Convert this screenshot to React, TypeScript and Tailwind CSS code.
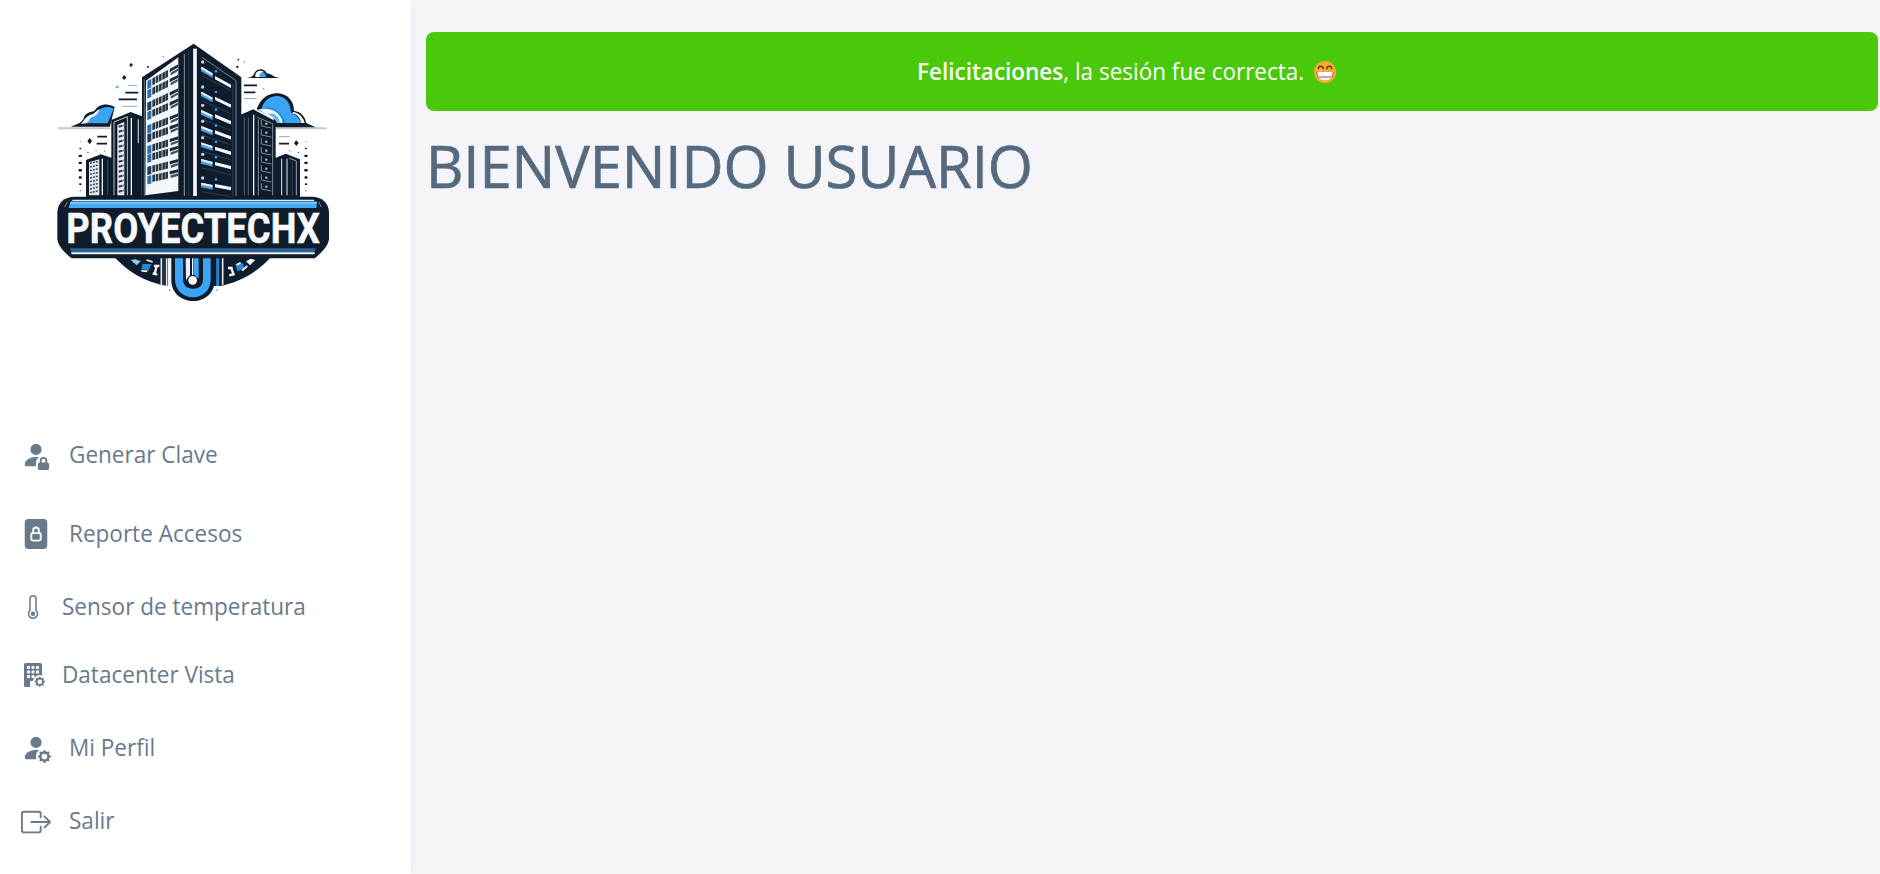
import React from 'react';
import {
  BsPersonFillLock,
  BsFileLockFill,
  BsThermometer,
  BsBuildingFillGear,
  BsPersonFillGear,
  BsBoxArrowRight,
} from 'react-icons/bs';

const INK = '#0f1c2b';
const SKY = '#3ba4f4';

const lerp = (a: number, b: number, t: number) => a + (b - a) * t;

function LeftFace() {
  const rows = [153, 181, 218, 246, 286, 313, 348, 374, 410, 438];
  return (
    <g>
      <polygon points="318,152 415,82 415,483 316,496" fill="#f3f7fa" />
      {rows.map((yl, i) => {
        const rise = lerp(50, 20, (yl - 153) / 285);
        const at = (x: number) => yl - (rise * (x - 322)) / 93;
        const h = 21;
        return (
          <g key={yl}>
            <polygon
              points={`322,${at(322)} 334,${at(334)} 334,${at(334) + h + 4} 322,${at(322) + h + 4}`}
              fill={i % 3 === 2 ? '#1c3f61' : '#2f6ea6'}
            />
            {[337, 347, 357, 367, 376].map((x) => (
              <polygon
                key={x}
                points={`${x},${at(x)} ${x + 8},${at(x + 8)} ${x + 8},${at(x + 8) + h} ${x},${at(x) + h}`}
                fill="#2b3846"
              />
            ))}
            <polygon
              points={`389,${at(389)} 415,${at(415)} 415,${at(415) + 9} 389,${at(389) + 10}`}
              fill="#1d2a38"
            />
            <polygon
              points={`392,${at(392) + 13} 415,${at(415) + 12} 415,${at(415) + 19} 392,${at(392) + 21}`}
              fill="#44515e"
            />
          </g>
        );
      })}
    </g>
  );
}

function RightFace() {
  const rows = [
    [110, 138],
    [185, 200],
    [240, 253],
    [288, 301],
    [337, 350],
    [387, 396],
    [458, 462],
  ];
  return (
    <g>
      <path d="M486 82L588 152V500" fill="none" stroke="#6c8296" strokeWidth="3" />
      <path d="M579 160V500" stroke="#24445f" strokeWidth="3" />
      {rows.map(([l, r], i) => {
        const s = lerp(20, 7, i / 6);
        return (
          <g key={l}>
            <polygon points={`483,${l} 518,${l + s} 518,${l + s + 14} 483,${l + 14}`} fill="#4d9fe0" />
            <path d={`M484 ${l + 3}L517 ${l + s + 3}`} stroke="#e6f3fc" strokeWidth="6" />
            <polygon points={`525,${r} 573,${r + s * 1.3} 573,${r + s * 1.3 + 10} 525,${r + 10}`} fill="#f2f7fb" />
            <circle cx="488" cy={l - 14} r="5" fill="#c7d3de" />
            <circle cx="528" cy={r - 14} r="4" fill="#3f9be0" />
            <path d={`M486 ${l + 27}L572 ${l + 27 + s * 2.2}`} stroke="#34465a" strokeWidth="2.5" />
          </g>
        );
      })}
    </g>
  );
}

function SideTowers() {
  const l = Array.from({ length: 14 }, (_, i) => 286 + i * 15);
  const o = Array.from({ length: 9 }, (_, i) => 400 + i * 11);
  const r = [278, 305, 332, 359, 386, 413, 440, 467];
  return (
    <g>
      <polygon points="138,390 183,373 216,384 216,505 138,505" fill={INK} />
      <polygon points="147,397 178,388 178,496 147,496" fill="#dfe5ea" />
      {o.map((y) => (
        <path key={y} d={`M150 ${y}L176 ${y - 6}`} stroke="#33414f" strokeWidth="4" strokeDasharray="6 3" />
      ))}
      <path d="M187 386V496" stroke="#e8edf1" strokeWidth="4" />
      <path d="M203 390V496" stroke="#53616e" strokeWidth="2" />

      <polygon points="214,270 272,246 310,260 310,505 214,505" fill={INK} />
      <path d="M222 276V496M222 276L262 260V496" fill="none" stroke="#b8c3cc" strokeWidth="3" />
      <polygon points="232,284 253,276 253,496 232,496" fill="#e6ebef" />
      {l.map((y) => (
        <path key={y} d={`M236 ${y + 4}L251 ${y}`} stroke="#2c3946" strokeWidth="6" strokeDasharray="12 2" />
      ))}
      <path d="M274 264V496" stroke="#eef2f5" strokeWidth="4" />
      <path d="M295 268V340" stroke="#a7b4bf" strokeWidth="4" />
      <path d="M304 268V496" stroke="#33506a" strokeWidth="2" />

      <polygon points="700,386 737,371 780,388 780,505 700,505" fill={INK} />
      <path d="M725 386V496M741 386V496" stroke="#e2e8ed" strokeWidth="3" />
      <path d="M747 384L769 393V496" fill="none" stroke="#93a1ae" strokeWidth="3" />
      <path d="M757 394V496" stroke="#495867" strokeWidth="2" />

      <polygon points="598,256 640,238 707,274 707,505 598,505" fill={INK} />
      <path d="M613 262V496M625 262V496" stroke="#53616e" strokeWidth="3" />
      <path d="M641 254V496" stroke="#eef2f5" strokeWidth="4" />
      <path d="M652 262L698 281V496M655 268V496" fill="none" stroke="#7e8c99" strokeWidth="3" />
      {r.map((y) => (
        <g key={y}>
          <path d={`M664 ${y - 8}V${y + 10}L694 ${y + 16}`} fill="none" stroke="#8f9ca8" strokeWidth="2.5" />
          <circle cx="679" cy={y + 3} r="3.5" fill="#b4bfc9" />
        </g>
      ))}
    </g>
  );
}

function Sky() {
  const dots = [335, 355, 377, 398, 420, 442, 462, 482];
  return (
    <g>
      <path d="M54 295H212M708 295H860" stroke="#c2c7cb" strokeWidth="6" />
      <path d="M92 290C112 284 122 279 130 268C134 250 148 246 162 244C174 224 200 216 224 231L210 290Z" fill={INK} />
      <path d="M126 280C132 272 138 256 160 252C180 234 198 224 221 236L203 280Z" fill={SKY} />
      <path d="M122 281C132 277 136 256 160 252C168 246 172 240 178 238C174 250 170 258 158 260C148 264 148 274 140 280Z" fill="#f4fafe" />
      <path d="M650 238C662 202 690 188 714 190C744 192 762 214 762 242C784 246 796 260 798 278C810 284 820 288 828 292H706L700 262Z" fill={INK} />
      <path d="M664 236C674 208 692 198 712 198C738 200 752 220 753 248C766 252 778 264 784 279H712L700 262Z" fill={SKY} />
      <path d="M664 236C690 226 720 236 738 279H712L700 262Z" fill="#2488dc" />
      <path d="M654 238C696 230 724 250 728 278H712L706 268Z" fill="#f4fafe" />
      <path d="M684 251C704 248 716 258 720 278H712L706 266Z" fill="#63b9f5" />
      <path d="M756 250C774 252 782 268 784 279H794C790 262 778 250 760 246Z" fill="#fff" />
      <path d="M622 144C638 142 640 136 643 130C650 114 674 114 680 130C694 130 698 142 720 144Z" fill={INK} />
      <path d="M646 141C644 124 660 118 672 126C664 128 660 134 660 141Z" fill="#fff" />
      <path d="M658 141C658 128 668 122 676 132L678 141Z" fill={SKY} />
      <g stroke={INK} strokeWidth="5">
        <path d="M256 188H295M236 208H291M172 320H201M170 341H201M612 166H651M612 187H646M717 341H747" />
        <path d="M264 166H291M247 229H292M612 206H650M717 320H749" stroke="#9aa3ab" strokeWidth="3" />
      </g>
      <g fill={INK}>
        <path d="M273 98L279 105L272 111L268 105ZM253 135L259 143L252 150L246 143ZM149 324L156 333L149 343L142 333ZM769 331L776 339L769 348L762 339Z" />
        <circle cx="324" cy="111" r="3" />
        <circle cx="595" cy="89" r="2.5" />
        <circle cx="592" cy="111" r="3.5" />
        <circle cx="613" cy="96" r="1.5" />
        <circle cx="671" cy="176" r="1.5" />
        <circle cx="370" cy="80" r="1.5" />
        <circle cx="144" cy="367" r="2" />
        <circle cx="168" cy="362" r="1.5" />
        <circle cx="194" cy="363" r="1.5" />
        <circle cx="775" cy="367" r="2" />
        <circle cx="749" cy="362" r="1.5" />
      </g>
      <path d="M228 173L236 169" stroke={SKY} strokeWidth="5" />
      {dots.map((y, i) => {
        const w = [3, 6, 9, 9, 10, 9, 7, 4][i];
        return (
          <g key={y} fill={INK}>
            <rect x={121 - w / 2} y={y - w / 3} width={w} height={w * 0.8} rx="2" />
            <rect x={798 - w / 2} y={y - w / 3} width={w} height={w * 0.8} rx="2" />
          </g>
        );
      })}
    </g>
  );
}

function Emblem() {
  return (
    <g>
      <path d="M222 680C262 722 310 756 384 768H540C604 756 656 722 694 680Z" fill={INK} />
      <path d="M364 684V764M380 684V768M548 684V764" stroke="#dfe6ec" strokeWidth="5" />
      <path d="M372 684V766" stroke="#2d3b49" strokeWidth="4" />
      <path d="M384 684H396V770L384 768Z" fill="#eef2f5" />
      <path d="M533 684V768" stroke="#2b83cd" strokeWidth="9" />
      <path d="M272 690L286 688L302 694L290 706Z" fill="#8bc8f3" />
      <path d="M308 702L334 702L326 722L304 716Z" fill="#2d86d0" />
      <path d="M320 690L338 696M304 722L322 724" stroke="#fff" strokeWidth="5" />
      <path d="M342 708H358M338 730L352 734M350 708L344 732" stroke="#fff" strokeWidth="7" />
      <path d="M646 690L632 686L618 694L630 706Z" fill="#eaf5fd" />
      <path d="M610 700L586 702L592 724L612 716Z" fill="#2d86d0" />
      <path d="M606 722L622 708M590 704L602 698" stroke="#fff" strokeWidth="5" />
      <path d="M564 714H578M568 736L584 732M574 714L580 732" stroke="#fff" strokeWidth="7" />
      <path d="M394 680H524V750C524 790 494 813 460 813C424 813 394 790 394 750Z" fill={INK} />
      <path d="M405 684H512V748C512 782 488 802 459 802C430 802 405 782 405 748Z" fill={SKY} />
      <path d="M429 684H489V748C489 766 478 776 459 776C440 776 429 766 429 748Z" fill={INK} />
      <path d="M437 684H450V736C442 742 440 748 438 752Z" fill="#e8f1f8" />
      <path d="M462 684H476V746L462 734Z" fill={SKY} />
      <path d="M458 684V735" stroke="#fff" strokeWidth="4" />
      <circle cx="458" cy="751" r="13" fill="#fff" />
      <circle cx="389" cy="780" r="2.5" fill="#6f7a84" />
      <circle cx="531" cy="780" r="2.5" fill="#6f7a84" />
      <path d="M104 500H815C846 500 867 520 867 548V625C867 645 846 668 824 685H95C72 668 52 645 52 625V548C52 520 72 500 104 500Z" fill={INK} />
      <path d="M97 511H822" stroke="#dbeefc" strokeWidth="4" />
      <path d="M92 514H830V534H86Z" fill="#45aaf0" />
      <path d="M92 517H830V522H90Z" fill="#7cc6f7" />
      <path d="M74 531L82 516M836 516L844 531" stroke="#7e8d9a" strokeWidth="3" />
      <path d="M90 655H828L824 666H94Z" fill="#2c6197" />
      <path d="M94 670H824" stroke="#e9f4fc" strokeWidth="6" />
      <g transform="translate(79 640) scale(0.86 1)">
        <text
          x="0"
          y="0"
          fontFamily="Roboto, sans-serif"
          fontWeight="700"
          fontSize="127"
          textLength="884"
          stroke="#f7f9fb"
          strokeWidth="1.5"
          fill="#f7f9fb"
        >
          PROYECTECHX
        </text>
      </g>
    </g>
  );
}

function Logo() {
  return (
    <svg viewBox="0 0 930 840" className="ml-10 block h-[280px] w-[310px] overflow-visible" role="img">
      <Sky />
      <SideTowers />
      <polygon points="461,41 604,142 604,505 306,505 306,142" fill={INK} />
      <path d="M313 148V498" stroke="#6f8191" strokeWidth="2.5" />
      <LeftFace />
      <path d="M433 72V498" stroke="#8695a3" strokeWidth="3" />
      <path d="M446 64V498" stroke="#2b3a48" strokeWidth="3" />
      <path d="M465 56V498" stroke="#f4f7f9" strokeWidth="11" />
      <RightFace />
      <Emblem />
    </svg>
  );
}

function GrinEmoji() {
  return (
    <svg viewBox="0 0 66 66" className="block h-[22px] w-[22px]">
      <circle cx="33" cy="33" r="33" fill="#fcab30" />
      <path d="M13 23C14 13 26 13 28 23M38 23C40 13 52 13 53 23" fill="none" stroke="#5b3a2a" strokeWidth="4.5" strokeLinecap="round" />
      <path d="M9 33H57C58 48 48 58 33 58C18 58 8 48 9 33Z" fill="#fff" />
      <path d="M9 33C8 40 10 45 13 48H53C56 45 58 40 57 33" fill="none" stroke="#c9358b" strokeWidth="3" />
    </svg>
  );
}

const items = [
  { label: 'Generar Clave', Icon: BsPersonFillLock, row: 'h-[82px] gap-[18px]', icon: 'size-[30px]', text: '-mt-0.5' },
  { label: 'Reporte Accesos', Icon: BsFileLockFill, row: 'h-[76px] gap-[18px]', icon: 'size-[30px]', text: '-mt-0.5' },
  { label: 'Sensor de temperatura', Icon: BsThermometer, row: 'h-[70px] gap-[17px]', icon: 'size-[24px] -ml-[0.5px]', text: '-mt-0.5' },
  { label: 'Datacenter Vista', Icon: BsBuildingFillGear, row: 'h-[66px] gap-[17px]', icon: 'size-[24px] -ml-[0.5px]', text: '-mt-0.5' },
  { label: 'Mi Perfil', Icon: BsPersonFillGear, row: 'h-[80px] gap-[18px]', icon: 'size-[30px]', text: '-mt-0.5' },
  { label: 'Salir', Icon: BsBoxArrowRight, row: 'h-[68px] gap-[18px]', icon: 'size-[30px]', text: '-mt-1' },
];

export default function App() {
  return (
    <div className="flex h-[874px] w-full overflow-hidden bg-[#f5f4f9] font-['Open_Sans',sans-serif]">
      <aside className="flex w-[411px] shrink-0 flex-col bg-white pt-[30px] shadow-[0_2px_6px_0_rgba(161,172,184,0.12)]">
        <Logo />
        <nav className="mt-[104px] flex flex-col text-[#697a8d]">
          {items.map(({ label, Icon, row, icon, text }) => (
            <a key={label} href="#" className={`flex items-center pl-[21px] ${row}`}>
              <Icon className={`shrink-0 ${icon}`} />
              <span className={`origin-left scale-x-[0.939] text-2xl leading-9 whitespace-nowrap ${text}`}>{label}</span>
            </a>
          ))}
        </nav>
      </aside>
      <main className="min-w-0 flex-1 pt-8 pr-[2px] pl-[15px]">
        <div className="flex h-[79px] items-center justify-center rounded-lg bg-[#49c90a] pr-[77px] text-2xl text-white">
          <span className="-mt-0.5 origin-right scale-x-[0.937] whitespace-pre">
            <strong className="font-semibold">Felicitaciones</strong>, la sesión fue correcta.
          </span>
          <span className="ml-[10px]">
            <GrinEmoji />
          </span>
        </div>
        <h1 className="mt-[15px] text-[58px] leading-[80px] font-normal tracking-[-0.1px] text-[#566a7f] [-webkit-text-stroke:0.7px_#566a7f]">
          BIENVENIDO USUARIO
        </h1>
      </main>
    </div>
  );
}
